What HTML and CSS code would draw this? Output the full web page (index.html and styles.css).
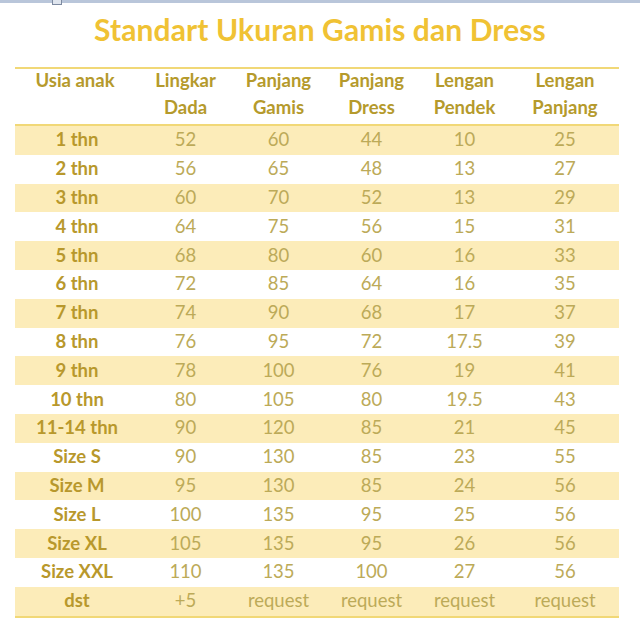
FILE: index.html
```html
<!DOCTYPE html>
<html lang="id">
<head>
<meta charset="utf-8">
<title>Standart Ukuran Gamis dan Dress</title>
<link rel="stylesheet" href="styles.css">
</head>
<body>
<div class="topbar"><span class="topicon"></span></div>
<h1 class="title">Standart Ukuran Gamis dan Dress</h1>
<div class="table">
  <div class="row head">
    <div class="c">Usia anak</div>
    <div class="c">Lingkar<br>Dada</div>
    <div class="c">Panjang<br>Gamis</div>
    <div class="c">Panjang<br>Dress</div>
    <div class="c">Lengan<br>Pendek</div>
    <div class="c">Lengan<br>Panjang</div>
  </div>
  <div class="row band"><div class="c lab">1 thn</div><div class="c">52</div><div class="c">60</div><div class="c">44</div><div class="c">10</div><div class="c">25</div></div>
  <div class="row"><div class="c lab">2 thn</div><div class="c">56</div><div class="c">65</div><div class="c">48</div><div class="c">13</div><div class="c">27</div></div>
  <div class="row band"><div class="c lab">3 thn</div><div class="c">60</div><div class="c">70</div><div class="c">52</div><div class="c">13</div><div class="c">29</div></div>
  <div class="row"><div class="c lab">4 thn</div><div class="c">64</div><div class="c">75</div><div class="c">56</div><div class="c">15</div><div class="c">31</div></div>
  <div class="row band"><div class="c lab">5 thn</div><div class="c">68</div><div class="c">80</div><div class="c">60</div><div class="c">16</div><div class="c">33</div></div>
  <div class="row"><div class="c lab">6 thn</div><div class="c">72</div><div class="c">85</div><div class="c">64</div><div class="c">16</div><div class="c">35</div></div>
  <div class="row band"><div class="c lab">7 thn</div><div class="c">74</div><div class="c">90</div><div class="c">68</div><div class="c">17</div><div class="c">37</div></div>
  <div class="row"><div class="c lab">8 thn</div><div class="c">76</div><div class="c">95</div><div class="c">72</div><div class="c">17.5</div><div class="c">39</div></div>
  <div class="row band"><div class="c lab">9 thn</div><div class="c">78</div><div class="c">100</div><div class="c">76</div><div class="c">19</div><div class="c">41</div></div>
  <div class="row"><div class="c lab">10 thn</div><div class="c">80</div><div class="c">105</div><div class="c">80</div><div class="c">19.5</div><div class="c">43</div></div>
  <div class="row band"><div class="c lab">11-14 thn</div><div class="c">90</div><div class="c">120</div><div class="c">85</div><div class="c">21</div><div class="c">45</div></div>
  <div class="row"><div class="c lab">Size S</div><div class="c">90</div><div class="c">130</div><div class="c">85</div><div class="c">23</div><div class="c">55</div></div>
  <div class="row band"><div class="c lab">Size M</div><div class="c">95</div><div class="c">130</div><div class="c">85</div><div class="c">24</div><div class="c">56</div></div>
  <div class="row"><div class="c lab">Size L</div><div class="c">100</div><div class="c">135</div><div class="c">95</div><div class="c">25</div><div class="c">56</div></div>
  <div class="row band"><div class="c lab">Size XL</div><div class="c">105</div><div class="c">135</div><div class="c">95</div><div class="c">26</div><div class="c">56</div></div>
  <div class="row"><div class="c lab">Size XXL</div><div class="c">110</div><div class="c">135</div><div class="c">100</div><div class="c">27</div><div class="c">56</div></div>
  <div class="row band last"><div class="c lab">dst</div><div class="c">+5</div><div class="c">request</div><div class="c">request</div><div class="c">request</div><div class="c">request</div></div>
</div>
</body>
</html>
```

FILE: styles.css
```css
html, body {
  margin: 0;
  padding: 0;
  background: #ffffff;
}
body {
  width: 640px;
  height: 640px;
  overflow: hidden;
  font-family: "Lato", "Open Sans", "Liberation Sans", sans-serif;
}
.topbar {
  height: 3px;
  background: #b9c6da;
  position: relative;
}
.topicon {
  position: absolute;
  left: 52px;
  top: 0;
  width: 8px;
  height: 4px;
  border: 1px solid #7d8aa0;
  border-top: none;
  background: #dfe5ee;
}
.title {
  margin: 0;
  padding-top: 9px;
  height: 52px;
  box-sizing: border-box;
  text-align: center;
  font-size: 30px;
  font-weight: 700;
  line-height: 34px;
  color: #f0c234;
  letter-spacing: 0.1px;
}
.table {
  margin: 12px 0 0 15px;
  width: 604px;
  border-top: 2px solid #f1d877;
  border-bottom: 2px solid #f1d877;
}
.row {
  display: grid;
  grid-template-columns: 124px 93px 93px 93px 93px 108px;
  height: 28.8px;
  align-items: center;
  font-size: 18.5px;
  color: #bcaa58;
}
.row.head {
  height: 55px;
  border-bottom: 2px solid #f1d877;
  font-weight: 700;
  color: #b59a2c;
  line-height: 27px;
  align-items: start;
}
.row.head .c {
  margin-top: -2px;
}
.row.head .c:first-child {
  padding-right: 4px;
}
.band {
  background: #fcecb9;
}
.c {
  text-align: center;
  white-space: nowrap;
  margin-top: -2px;
}
.lab {
  font-weight: 700;
  color: #b8982c;
}
```
